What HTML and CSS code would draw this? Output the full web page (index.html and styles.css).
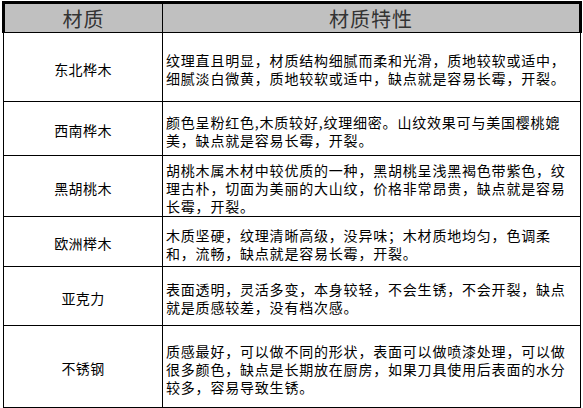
FILE: index.html
```html
<!DOCTYPE html>
<html lang="zh">
<head>
<meta charset="utf-8">
<title>材质特性</title>
<link rel="stylesheet" href="styles.css">
</head>
<body>
<table class="sheet">
  <colgroup><col class="c-name"><col class="c-desc"></colgroup>
  <thead>
    <tr class="head"><th>材质</th><th>材质特性</th></tr>
  </thead>
  <tbody>
    <tr class="r1"><td class="name">东北桦木</td><td class="desc">纹理直且明显，材质结构细腻而柔和光滑，质地较软或适中，<br>细腻淡白微黄，质地较软或适中，缺点就是容易长霉，开裂。</td></tr>
    <tr class="r2"><td class="name">西南桦木</td><td class="desc">颜色呈粉红色,木质较好,纹理细密。山纹效果可与美国樱桃媲<br>美，缺点就是容易长霉，开裂。</td></tr>
    <tr class="r3"><td class="name">黑胡桃木</td><td class="desc">胡桃木属木材中较优质的一种，黑胡桃呈浅黑褐色带紫色，纹<br>理古朴，切面为美丽的大山纹，价格非常昂贵，缺点就是容易<br>长霉，开裂。</td></tr>
    <tr class="r4"><td class="name">欧洲榉木</td><td class="desc">木质坚硬，纹理清晰高级，没异味；木材质地均匀，色调柔<br>和，流畅，缺点就是容易长霉，开裂。</td></tr>
    <tr class="r5"><td class="name">亚克力</td><td class="desc">表面透明，灵活多变，本身较轻，不会生锈，不会开裂，缺点<br>就是质感较差，没有档次感。</td></tr>
    <tr class="r6"><td class="name">不锈钢</td><td class="desc">质感最好，可以做不同的形状，表面可以做喷漆处理，可以做<br>很多颜色，缺点是长期放在厨房，如果刀具使用后表面的水分<br>较多，容易导致生锈。</td></tr>
  </tbody>
</table>
</body>
</html>
```
FILE: styles.css
```css
html, body {
  margin: 0;
  padding: 0;
  background: #ffffff;
}
body {
  padding: 1px 0 0 2px;
  font-family: "Noto Sans CJK SC", "Noto Sans", sans-serif;
  color: #000;
}
.sheet {
  border-collapse: collapse;
  table-layout: fixed;
  width: 577px;
}
.c-name { width: 159px; }
.c-desc { width: 418px; }
.head th {
  height: 26px;
  padding: 2px 0 0 0;
  background: #c0c0c0;
  border-top: 3px solid #000;
  border-bottom: 1px solid #000;
  border-left: 1px solid #000;
  border-right: 1px solid #000;
  font-size: 20px;
  font-weight: normal;
  line-height: 26px;
  color: #333;
  text-align: center;
  letter-spacing: 1px;
}
.head th:first-child { border-left: 3px solid #000; }
.head th:last-child { border-right: 3px solid #000; }
td {
  border: 1px solid #000;
  vertical-align: middle;
  font-size: 14px;
  line-height: 18px;
}
.name {
  text-align: center;
  letter-spacing: 0.4px;
  padding: 3px 0 0 0;
}
.desc {
  padding: 4px 0 0 3px;
  letter-spacing: 0.8px;
  white-space: nowrap;
}
.r1 td { height: 64px; }
.r2 td { height: 49px; }
.r3 td { height: 56px; }
.r4 td { height: 45px; }
.r5 td { height: 54px; }
.r6 td { height: 77px; }
```
